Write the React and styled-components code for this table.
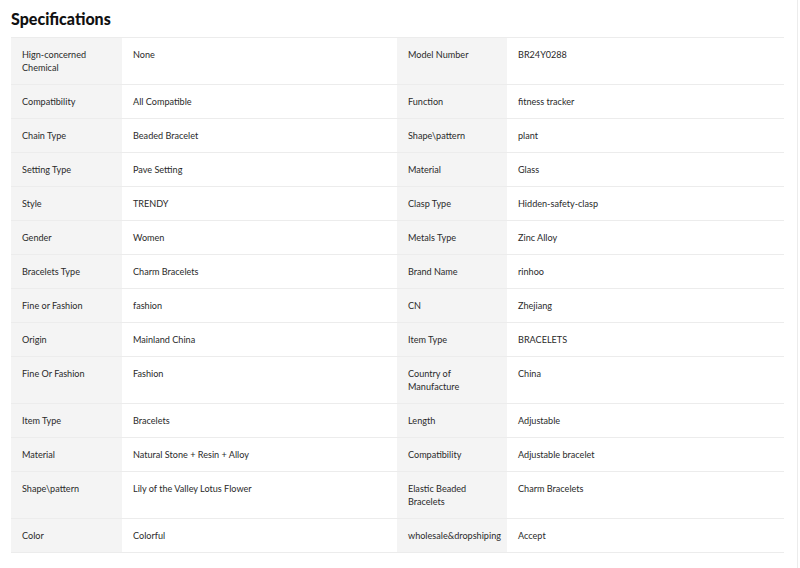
import React from "react";
import styled, { createGlobalStyle } from "styled-components";

const GlobalStyle = createGlobalStyle`
  html, body {
    margin: 0;
    padding: 0;
    background: #fff;
  }
  body {
    font-family: "Lato", "Liberation Sans", sans-serif;
    color: #222;
  }
`;

const Page = styled.div`
  width: 798px;
  min-height: 568px;
  border-right: 1px solid #ececec;
  padding: 9px 0 0 11px;
  box-sizing: border-box;
`;

const Title = styled.h2`
  font-family: "Lato", sans-serif;
  font-weight: 900;
  font-size: 16px;
  line-height: 20px;
  margin: 0 0 8px;
  color: #111;
`;

const Table = styled.div`
  width: 773px;
  border-top: 1px solid #ececec;
`;

const Row = styled.div`
  display: grid;
  grid-template-columns: 111px 275px 110px 277px;
  border-bottom: 1px solid #ececec;
`;

const Cell = styled.div`
  padding: 10px 11px;
  font-size: 9.1px;
  line-height: 13px;
  color: #2a2a2a;
  background: ${(p) => (p.$label ? "#f4f4f4" : "#fff")};
  min-height: 13px;
`;

const specs = [
  ["Hign-concerned Chemical", "None", "Model Number", "BR24Y0288"],
  ["Compatibility", "All Compatible", "Function", "fitness tracker"],
  ["Chain Type", "Beaded Bracelet", "Shape\\pattern", "plant"],
  ["Setting Type", "Pave Setting", "Material", "Glass"],
  ["Style", "TRENDY", "Clasp Type", "Hidden-safety-clasp"],
  ["Gender", "Women", "Metals Type", "Zinc Alloy"],
  ["Bracelets Type", "Charm Bracelets", "Brand Name", "rinhoo"],
  ["Fine or Fashion", "fashion", "CN", "Zhejiang"],
  ["Origin", "Mainland China", "Item Type", "BRACELETS"],
  ["Fine Or Fashion", "Fashion", "Country of Manufacture", "China"],
  ["Item Type", "Bracelets", "Length", "Adjustable"],
  ["Material", "Natural Stone + Resin + Alloy", "Compatibility", "Adjustable bracelet"],
  ["Shape\\pattern", "Lily of the Valley Lotus Flower", "Elastic Beaded Bracelets", "Charm Bracelets"],
  ["Color", "Colorful", "wholesale&dropshiping", "Accept"],
];

const App = () => {
  return (
    <Page>
      <GlobalStyle />
      <Title>Specifications</Title>
      <Table>
        {specs.map((row, i) => (
          <Row key={i}>
            <Cell $label>{row[0]}</Cell>
            <Cell>{row[1]}</Cell>
            <Cell $label>{row[2]}</Cell>
            <Cell>{row[3]}</Cell>
          </Row>
        ))}
      </Table>
    </Page>
  );
};

export default App;
